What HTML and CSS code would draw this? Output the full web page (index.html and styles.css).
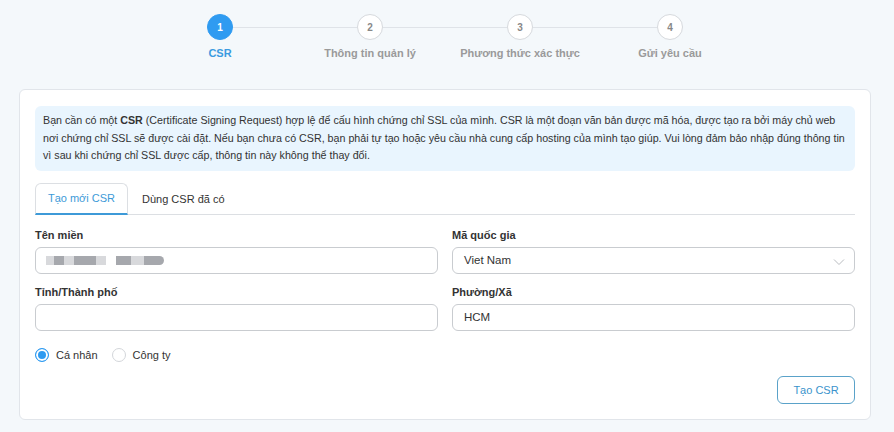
FILE: index.html
```html
<!DOCTYPE html>
<html lang="vi">
<head>
<meta charset="utf-8">
<link rel="stylesheet" href="styles.css">
</head>
<body>
<div class="page">
  <div class="steps">
    <div class="step active"><div class="circle">1</div><div class="step-label">CSR</div></div>
    <div class="step"><div class="circle">2</div><div class="step-label">Thông tin quản lý</div></div>
    <div class="step"><div class="circle">3</div><div class="step-label">Phương thức xác thực</div></div>
    <div class="step last"><div class="circle">4</div><div class="step-label">Gửi yêu cầu</div></div>
  </div>

  <div class="card">
    <div class="info">Bạn cần có một <b>CSR</b> (Certificate Signing Request) hợp lệ để cấu hình chứng chỉ SSL của mình. CSR là một đoạn văn bản được mã hóa, được tạo ra bởi máy chủ web<br>nơi chứng chỉ SSL sẽ được cài đặt. Nếu bạn chưa có CSR, bạn phải tự tạo hoặc yêu cầu nhà cung cấp hosting của mình tạo giúp. Vui lòng đảm bảo nhập đúng thông tin<br>vì sau khi chứng chỉ SSL được cấp, thông tin này không thể thay đổi.</div>

    <div class="tabs">
      <div class="tab active">Tạo mới CSR</div>
      <div class="tab">Dùng CSR đã có</div>
    </div>

    <div class="grid">
      <div class="field">
        <div class="label">Tên miền</div>
        <div class="input"><span class="blur"><i class="l w8"></i><i class="d w10"></i><i class="l w10"></i><i class="d w22"></i><i class="l w10"></i><i class="gap"></i><i class="d w15"></i><i class="l w13"></i><i class="d w20 end"></i></span></div>
      </div>
      <div class="field">
        <div class="label">Mã quốc gia</div>
        <div class="input select">Viet Nam
          <svg class="chev" width="12" height="8" viewBox="0 0 12 8"><path d="M1 1.5 L6 6.5 L11 1.5" fill="none" stroke="#b9bcc0" stroke-width="1"/></svg>
        </div>
      </div>
      <div class="field">
        <div class="label">Tỉnh/Thành phố</div>
        <div class="input"></div>
      </div>
      <div class="field">
        <div class="label">Phường/Xã</div>
        <div class="input">HCM</div>
      </div>
    </div>

    <div class="radios">
      <label class="radio"><span class="dot checked"></span>Cá nhân</label>
      <label class="radio"><span class="dot"></span>Công ty</label>
    </div>

    <div class="actions">
      <div class="btn">Tạo CSR</div>
    </div>
  </div>
</div>
</body>
</html>
```

FILE: styles.css
```css
* { box-sizing: border-box; }
html, body { margin: 0; padding: 0; }
body {
  background: #f4f8fb;
  font-family: "Liberation Sans", Arial, sans-serif;
  color: #333;
  width: 894px;
  height: 432px;
  overflow: hidden;
}
.page { padding-top: 14px; }

.steps {
  display: flex;
  justify-content: center;
  margin-left: -4px;
}
.step {
  width: 150px;
  display: flex;
  flex-direction: column;
  align-items: center;
  position: relative;
}
.step::after {
  content: "";
  position: absolute;
  top: 13px;
  left: 88px;
  width: 124px;
  height: 1px;
  background: #dfe3e8;
}
.step.last::after { display: none; }
.circle {
  width: 26px;
  height: 26px;
  border-radius: 50%;
  border: 1px solid #d6d9dd;
  background: #fff;
  color: #888;
  font-size: 10px;
  font-weight: bold;
  display: flex;
  align-items: center;
  justify-content: center;
}
.step.active .circle {
  background: #2f9bf1;
  border-color: #2f9bf1;
  color: #fff;
}
.step-label {
  margin-top: 7px;
  font-size: 11px;
  font-weight: bold;
  color: #9a9a9a;
}
.step.active .step-label { color: #3b9be0; }

.card {
  margin: 30px 23px 0 19px;
  background: #fff;
  border: 1px solid #e1e5ea;
  border-radius: 6px;
  padding: 16px 15px 16px 15px;
  height: 331px;
}

.info {
  background: #e9f5fe;
  border-radius: 6px;
  padding: 6px 8px 6px 8px;
  font-size: 10.7px;
  line-height: 17.5px;
  color: #333;
  white-space: nowrap;
  overflow: hidden;
}
.info b { font-weight: bold; }

.tabs {
  display: flex;
  margin-top: 12px;
  border-bottom: 1px solid #dcdfe3;
  height: 32px;
}
.tab {
  padding: 0 14px;
  font-size: 11px;
  color: #333;
  display: flex;
  align-items: center;
  height: 32px;
  white-space: nowrap;
}
.tab.active {
  color: #3d9ad8;
  border: 1px solid #dcdfe3;
  border-bottom: 2px solid #3d9ad8;
  border-radius: 6px 6px 0 0;
  margin-bottom: -1px;
  height: 32px;
  width: 93px;
  padding: 0;
  justify-content: center;
}

.grid {
  display: grid;
  grid-template-columns: 1fr 1fr;
  column-gap: 14px;
  row-gap: 12px;
  margin-top: 14px;
}
.label {
  font-size: 11px;
  font-weight: bold;
  color: #333;
  height: 12px;
  line-height: 12px;
  margin-bottom: 6px;
}
.input {
  height: 27px;
  border: 1px solid #c9ccd0;
  border-radius: 6px;
  background: #fff;
  font-size: 11.5px;
  color: #333;
  padding: 0 11px;
  display: flex;
  align-items: center;
  position: relative;
}
.select .chev {
  position: absolute;
  right: 9px;
  top: 10px;
}
.blur { display: flex; align-items: center; height: 9px; margin-left: -1px; }
.blur i { display: block; height: 9px; }
.blur .l { background: #d8d9dc; }
.blur .d { background: #a6a8ad; }
.blur .w8 { width: 8px; }
.blur .w10 { width: 10px; }
.blur .w13 { width: 13px; }
.blur .w15 { width: 15px; }
.blur .w20 { width: 20px; }
.blur .w22 { width: 22px; }
.blur .gap { width: 10px; }
.blur .end { border-radius: 0 5px 5px 0; }

.radios {
  display: flex;
  gap: 14px;
  margin-top: 17px;
  font-size: 11px;
  color: #333;
}
.radio { display: flex; align-items: center; gap: 7px; }
.dot {
  width: 14px;
  height: 14px;
  border-radius: 50%;
  border: 1px solid #d3d6da;
  background: #fff;
}
.dot.checked {
  border: 1px solid #2f9bf1;
  background: #2f9bf1;
  box-shadow: inset 0 0 0 2px #fff;
}

.actions {
  display: flex;
  justify-content: flex-end;
  margin-top: 14px;
}
.btn {
  width: 78px;
  height: 28px;
  border: 1px solid #5aa2c9;
  border-radius: 6px;
  color: #3a93cc;
  font-size: 11px;
  display: flex;
  align-items: center;
  justify-content: center;
}
```
